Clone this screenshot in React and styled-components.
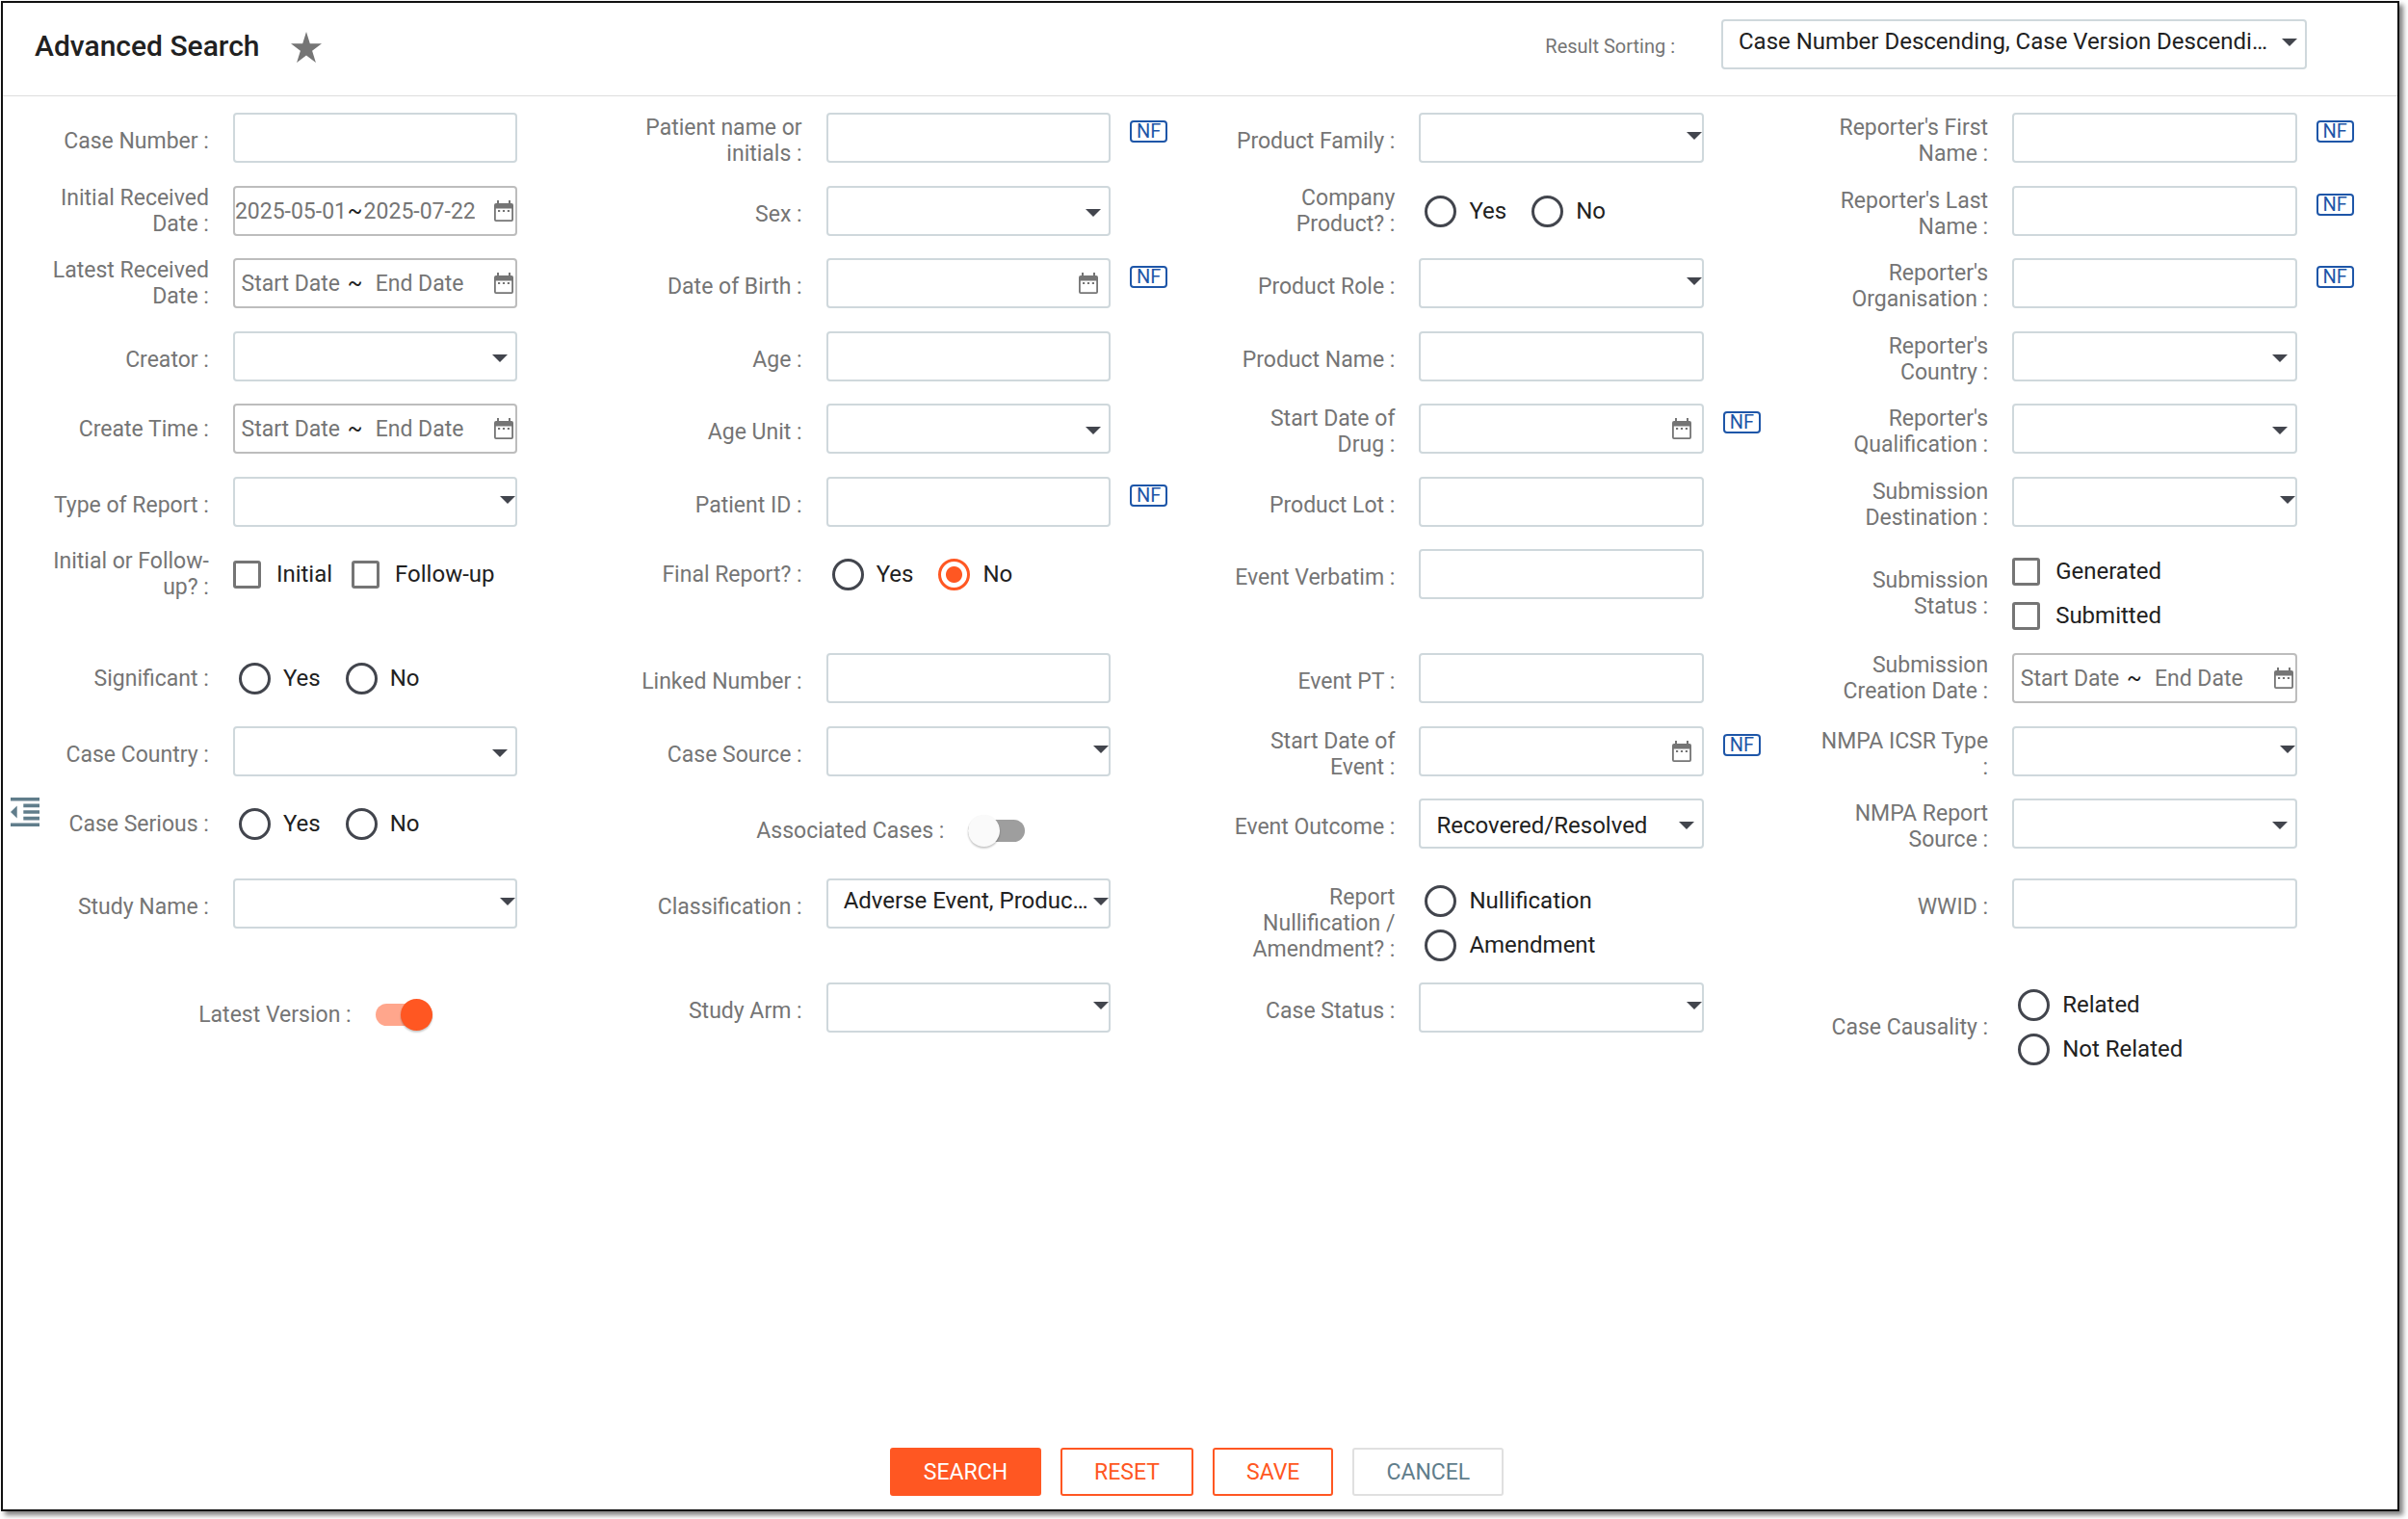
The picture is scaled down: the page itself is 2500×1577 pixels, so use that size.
import React from 'react'
import styled, { createGlobalStyle, css } from 'styled-components'

const GlobalStyle = createGlobalStyle`
  * {
    box-sizing: border-box;
  }
  body {
    margin: 0;
    background: #ffffff;
    font-family: Roboto, 'Liberation Sans', sans-serif;
    font-size: 24px;
    color: #212121;
  }
  input,
  select,
  button {
    font-family: inherit;
    margin: 0;
  }
`

const Page = styled.div`
  display: flex;
  min-height: 100vh;
  padding: 1px 9px 8px 1px;
`

const Panel = styled.main`
  display: flex;
  flex: 1;
  flex-direction: column;
  min-width: 0;
  border: 2px solid #111111;
  box-shadow: 4px 4px 5px rgba(0, 0, 0, 0.5);
`

const Header = styled.header`
  display: flex;
  align-items: center;
  height: 97px;
  padding: 0 94px 7px 33px;
  border-bottom: 1px solid #dddddd;
`

const Title = styled.h1`
  margin: 0;
  font-size: 30px;
  font-weight: 500;
`

const StarButton = styled.button`
  display: flex;
  margin-left: 33px;
  padding: 2px 0 0;
  border: 0;
  background: none;
  color: #757575;
`

const SortLabel = styled.label`
  margin: 0 48px 0 auto;
  font-size: 20px;
  color: #757575;
`

const SortBox = styled.div`
  width: 608px;
  margin-bottom: 3px;
`

const Body = styled.div`
  display: flex;
  flex: 1;
`

const Rail = styled.div`
  display: flex;
  align-items: center;
  width: 23px;
  padding: 18px 0 0 8px;
`

const CollapseButton = styled.button`
  display: flex;
  flex: none;
  padding: 0;
  border: 0;
  background: none;
  color: #607d8b;
`

const Form = styled.form`
  display: flex;
  flex: 1;
  flex-direction: column;
  justify-content: space-between;
  min-width: 0;
`

const FieldGrid = styled.div`
  display: grid;
  grid-template-columns: repeat(4, minmax(0, 1fr));
  grid-template-rows: repeat(3, 76px 75px) 108px 76px 75px 83px 108px 92px;
  padding-top: 17px;
`

const Field = styled.div`
  display: flex;
  align-items: center;
  height: ${(props) => props.$height || 52}px;
`

const labelStyle = css`
  flex: none;
  width: ${(props) => (props.$wide ? 55 : 31)}%;
  padding-left: 14px;
  padding-top: ${(props) => (props.$low ? 6 : 0)}px;
  margin-right: 25px;
  line-height: 27px;
  font-size: 23px;
  color: #757575;
  text-align: right;
`

const FieldLabel = styled.label`
  ${labelStyle}
`

const GroupLabel = styled.span`
  ${labelStyle}
`

const Control = styled.div`
  flex: none;
  width: 48%;
`

const boxStyle = css`
  width: 100%;
  height: 52px;
  border: 2px solid ${(props) => (props.$grey ? '#bdbdbd' : '#cfd8dc')};
  border-radius: 4px;
  background: #ffffff;
`

const TextInput = styled.input`
  ${boxStyle}
  display: block;
  padding: 0 16px;
  font-size: 24px;
`

const InputBox = styled.div`
  ${boxStyle}
  display: flex;
  align-items: center;
  color: #757575;
  padding-right: ${(props) => (props.$grey ? 2 : 11)}px;
`

const BareInput = styled.input`
  flex: 1;
  min-width: 0;
  height: 100%;
  padding: 0 16px;
  border: 0;
  background: none;
  font-size: 24px;
`

const RangeInput = styled.input`
  width: 40%;
  padding: 0;
  border: 0;
  background: none;
  font-size: 23px;
  color: #757575;
  text-align: center;
  &::placeholder {
    color: #757575;
    opacity: 1;
  }
`

const Tilde = styled.span`
  flex: 1;
  text-align: center;
  font-size: 23px;
  color: #212121;
`

const RangeIcon = styled.span`
  display: flex;
  margin-left: 20px;
`

const SelectBox = styled.div`
  display: grid;
  align-items: center;
  > * {
    grid-area: 1 / 1;
  }
`

const NativeSelect = styled.select`
  ${boxStyle}
  appearance: none;
  padding: ${(props) => (props.$high ? '0 0 6px 16px' : '3px 0 0 16px')};
  font-size: 24px;
  color: #212121;
`

const Caret = styled.span`
  justify-self: end;
  margin-right: ${(props) => (props.$edge ? 2 : 10)}px;
  margin-bottom: ${(props) => (props.$high ? 4 : 0)}px;
  margin-top: ${(props) => (props.$high ? 0 : 4)}px;
  border: 8px solid transparent;
  border-top-color: #42454d;
  border-bottom: 0;
  pointer-events: none;
`

const Options = styled.div`
  display: flex;
  flex: none;
  flex-direction: ${(props) => (props.$stacked ? 'column' : 'row')};
  column-gap: ${(props) => (props.$round ? 26 : 20)}px;
  padding-left: ${(props) => (props.$round ? 6 : 0)}px;
`

const Option = styled.label`
  display: flex;
  align-items: center;
  gap: ${(props) => (props.$round ? 13 : 16)}px;
  height: 46px;
  font-size: 24px;
`

const Radio = styled.input`
  appearance: none;
  width: 33px;
  height: 33px;
  border: 3px solid #42454d;
  border-radius: 50%;
  &:checked {
    border-color: #ff5722;
    background: radial-gradient(circle, #ff5722 8px, transparent 9px);
  }
`

const Checkbox = styled.input`
  appearance: none;
  width: 29px;
  height: 29px;
  border: 3px solid #757575;
  border-radius: 3px;
`

const Switch = styled.input`
  appearance: none;
  display: flex;
  align-items: center;
  width: 59px;
  height: 23px;
  border-radius: 12px;
  background: #9e9e9e;
  &::before {
    content: '';
    flex: none;
    width: 33px;
    height: 33px;
    border-radius: 50%;
    background: #fafafa;
    box-shadow: 0 2px 2px rgba(0, 0, 0, 0.14), 0 1px 2px rgba(0, 0, 0, 0.12);
  }
  &:checked {
    justify-content: flex-end;
    background: #ffa68c;
  }
  &:checked::before {
    background: #ff5722;
  }
`

const NullFlavor = styled.button`
  align-self: flex-start;
  width: 39px;
  height: 23px;
  margin: 8px 0 0 20px;
  padding: 0;
  border: 2px solid #1e56a8;
  border-radius: 4px;
  background: #ffffff;
  font-size: 20px;
  line-height: 19px;
  color: #1e56a8;
`

const Actions = styled.footer`
  display: flex;
  justify-content: center;
  gap: 20px;
  padding: 20px 30px 14px 0;
`

const ActionButton = styled.button`
  height: 50px;
  padding: 0 33px;
  border: 2px solid ${(props) => props.$border};
  border-radius: 3px;
  background: ${(props) => props.$fill || '#ffffff'};
  font-size: 23px;
  color: ${(props) => props.$color};
`

const StarIcon = () => (
  <svg width="32" height="32" viewBox="0 0 32 32" fill="currentColor">
    <path d="M16 0l3.8 12.2H32l-9.9 7.5L25.9 32 16 24.4 6.1 32l3.8-12.3L0 12.2h12.2z" />
  </svg>
)

const CalendarIcon = () => (
  <svg width="20" height="22" viewBox="0 0 20 22" fill="currentColor">
    <path
      d="M3 0h2v3h10V0h2v3h1a2 2 0 0 1 2 2v15a2 2 0 0 1-2 2H2a2 2 0 0 1-2-2V5a2 2 0 0 1 2-2h1zM1.800 8.500v11.700h16.400V8.500z"
      fillRule="evenodd"
    />
    <path d="M4 10h2.200v2H4zM8.900 10h2.200v2H8.900zM13.800 10H16v2h-2.200z" />
  </svg>
)

const DedentIcon = () => (
  <svg width="30" height="30" viewBox="0 0 30 30" fill="currentColor">
    <path d="M0 0h30v3.600H0zM13.300 6.600H30v3.600H13.300zM13.300 13.200H30v3.600H13.300zM13.300 19.800H30v3.600H13.300zM0 26.400h30V30H0zM6.700 8.600v12.800L0 15z" />
  </svg>
)

const FIELDS = [
  { label: 'Case Number', type: 'text' },
  { label: 'Patient name or initials', type: 'text', nf: true },
  { label: 'Product Family', type: 'multi' },
  { label: "Reporter's First Name", type: 'text', nf: true },

  { label: 'Initial Received Date', type: 'range', start: '2025-05-01', end: '2025-07-22' },
  { label: 'Sex', type: 'select' },
  { label: 'Company Product?', type: 'radio', options: ['Yes', 'No'] },
  { label: "Reporter's Last Name", type: 'text', nf: true },

  { label: 'Latest Received Date', type: 'range' },
  { label: 'Date of Birth', type: 'date', nf: true },
  { label: 'Product Role', type: 'multi' },
  { label: "Reporter's Organisation", type: 'text', nf: true },

  { label: 'Creator', type: 'select' },
  { label: 'Age', type: 'text' },
  { label: 'Product Name', type: 'text' },
  { label: "Reporter's Country", type: 'select' },

  { label: 'Create Time', type: 'range' },
  { label: 'Age Unit', type: 'select' },
  { label: 'Start Date of Drug', type: 'date', nf: true },
  { label: "Reporter's Qualification", type: 'select' },

  { label: 'Type of Report', type: 'multi' },
  { label: 'Patient ID', type: 'text', nf: true },
  { label: 'Product Lot', type: 'text' },
  { label: 'Submission Destination', type: 'multi' },

  { label: 'Initial or Follow-up?', type: 'checkbox', options: ['Initial', 'Follow-up'] },
  { label: 'Final Report?', type: 'radio', options: ['Yes', 'No'], value: 'No' },
  { label: 'Event Verbatim', type: 'text' },
  { label: 'Submission Status', type: 'checkbox', stacked: true, options: ['Generated', 'Submitted'] },

  { label: 'Significant', type: 'radio', options: ['Yes', 'No'] },
  { label: 'Linked Number', type: 'text' },
  { label: 'Event PT', type: 'text' },
  { label: 'Submission Creation Date', type: 'range' },

  { label: 'Case Country', type: 'select' },
  { label: 'Case Source', type: 'multi' },
  { label: 'Start Date of Event', type: 'date', nf: true },
  { label: 'NMPA ICSR Type', type: 'multi' },

  { label: 'Case Serious', type: 'radio', options: ['Yes', 'No'] },
  { label: 'Associated Cases', type: 'toggle' },
  { label: 'Event Outcome', type: 'select', value: 'Recovered/Resolved' },
  { label: 'NMPA Report Source', type: 'select' },

  { label: 'Study Name', type: 'multi' },
  { label: 'Classification', type: 'multi', value: 'Adverse Event, Produc…' },
  { label: 'Report Nullification / Amendment?', type: 'radio', stacked: true, options: ['Nullification', 'Amendment'] },
  { label: 'WWID', type: 'text' },

  { label: 'Latest Version', type: 'toggle', value: true },
  { label: 'Study Arm', type: 'multi' },
  { label: 'Case Status', type: 'multi' },
  { label: 'Case Causality', type: 'radio', stacked: true, options: ['Related', 'Not Related'] },
]

function Select({ id, value = '', multi, high }) {
  return (
    <SelectBox>
      <NativeSelect id={id} defaultValue={value} $high={high}>
        <option value={value}>{value}</option>
      </NativeSelect>
      <Caret $edge={multi} $high={high} />
    </SelectBox>
  )
}

function DateRange({ id, label, start, end }) {
  return (
    <InputBox $grey>
      <RangeInput id={id} defaultValue={start} placeholder="Start Date" />
      <Tilde>~</Tilde>
      <RangeInput aria-label={`${label} end`} defaultValue={end} placeholder="End Date" />
      <RangeIcon>
        <CalendarIcon />
      </RangeIcon>
    </InputBox>
  )
}

function OptionGroup({ id, type, options, value, stacked }) {
  const round = type === 'radio'
  const Box = round ? Radio : Checkbox
  return (
    <Options role="group" aria-labelledby={id} $round={round} $stacked={stacked}>
      {options.map((option) => (
        <Option key={option} $round={round}>
          <Box type={type} name={id} defaultChecked={option === value} />
          {option}
        </Option>
      ))}
    </Options>
  )
}

function FormField({ id, field }) {
  const { label, type, value, nf, stacked } = field

  if (type === 'radio' || type === 'checkbox') {
    return (
      <Field $height={stacked ? 92 : 52}>
        <GroupLabel id={id}>{label} :</GroupLabel>
        <OptionGroup {...field} id={id} />
      </Field>
    )
  }

  if (type === 'toggle') {
    return (
      <Field $height={67}>
        <FieldLabel htmlFor={id} $wide>
          {label} :
        </FieldLabel>
        <Switch id={id} type="checkbox" role="switch" defaultChecked={value} />
      </Field>
    )
  }

  return (
    <Field>
      <FieldLabel htmlFor={id} $low={type !== 'range'}>
        {label} :
      </FieldLabel>
      <Control>
        {type === 'text' && <TextInput id={id} type="text" />}
        {type === 'select' && <Select id={id} value={value} />}
        {type === 'multi' && <Select id={id} value={value} multi high />}
        {type === 'range' && <DateRange {...field} id={id} />}
        {type === 'date' && (
          <InputBox>
            <BareInput id={id} type="text" />
            <CalendarIcon />
          </InputBox>
        )}
      </Control>
      {nf && <NullFlavor type="button">NF</NullFlavor>}
    </Field>
  )
}

export default function App() {
  return (
    <Page>
      <GlobalStyle />
      <Panel>
        <Header>
          <Title>Advanced Search</Title>
          <StarButton type="button" aria-label="Add to favourites">
            <StarIcon />
          </StarButton>
          <SortLabel htmlFor="sorting">Result Sorting :</SortLabel>
          <SortBox>
            <Select id="sorting" value="Case Number Descending, Case Version Descendi…" high />
          </SortBox>
        </Header>
        <Body>
          <Rail>
            <CollapseButton type="button" aria-label="Collapse panel">
              <DedentIcon />
            </CollapseButton>
          </Rail>
          <Form onSubmit={(e) => e.preventDefault()}>
            <FieldGrid>
              {FIELDS.map((field, i) => (
                <FormField key={field.label} id={`field-${i}`} field={field} />
              ))}
            </FieldGrid>
            <Actions>
              <ActionButton type="submit" $border="#ff5722" $fill="#ff5722" $color="#ffffff">
                SEARCH
              </ActionButton>
              <ActionButton type="reset" $border="#ff5722" $color="#ff5722">
                RESET
              </ActionButton>
              <ActionButton type="button" $border="#ff5722" $color="#ff5722">
                SAVE
              </ActionButton>
              <ActionButton type="button" $border="#e0e0e0" $color="#607d8b">
                CANCEL
              </ActionButton>
            </Actions>
          </Form>
        </Body>
      </Panel>
    </Page>
  )
}
